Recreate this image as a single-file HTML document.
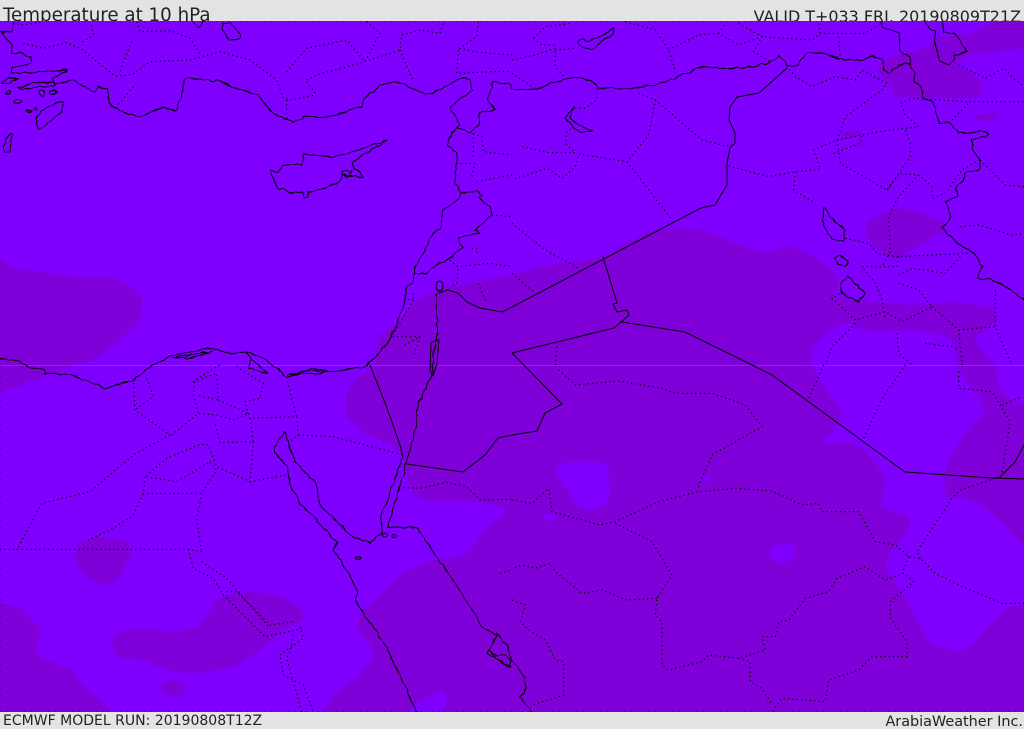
<!DOCTYPE html>
<html><head><meta charset="utf-8"><title>Temperature at 10 hPa</title>
<style>
html,body{margin:0;padding:0;background:#e3e3e3;}
#p{position:relative;width:1024px;height:729px;overflow:hidden;background:#e3e3e3;font-family:"DejaVu Sans",sans-serif;color:#222;}
.t{position:absolute;white-space:nowrap;}
#m{position:absolute;left:0;top:21px;width:1024px;height:691px;display:block;}
.c{fill:none;stroke:#000;stroke-width:1;stroke-linejoin:round;stroke-linecap:round;}
.d{fill:none;stroke:#000;stroke-width:3.6;stroke-dasharray:3.6 9.5;stroke-linecap:butt;opacity:1;}
</style></head><body><div id="p">
<div class="t" style="left:3px;top:5px;font-size:18.25px;line-height:21px;">Temperature at 10 hPa</div>
<div class="t" style="right:3px;top:6px;font-size:15.95px;line-height:21px;">VALID T+033 FRI. 20190809T21Z</div>
<div class="t" style="left:3px;top:712.500px;font-size:14.02px;line-height:17px;">ECMWF MODEL RUN: 20190808T12Z</div>
<div class="t" style="right:1px;top:713px;font-size:14.4px;line-height:18px;">ArabiaWeather Inc.</div>
<svg id="m" viewBox="0 21 1024 691" xmlns="http://www.w3.org/2000/svg">
<defs><filter id="s" filterUnits="userSpaceOnUse" x="-60" y="-60" width="1144" height="850" color-interpolation-filters="sRGB"><feGaussianBlur stdDeviation="2.2"/><feComponentTransfer><feFuncA type="linear" slope="3" intercept="-1"/></feComponentTransfer></filter>
<filter id="w" filterUnits="userSpaceOnUse" x="-20" y="-20" width="1064" height="770" color-interpolation-filters="sRGB"><feTurbulence type="fractalNoise" baseFrequency=".14" numOctaves="2" seed="4" result="n"/><feDisplacementMap in="SourceGraphic" in2="n" scale="4" xChannelSelector="R" yChannelSelector="G"/></filter></defs>
<rect x="0" y="21" width="1024" height="691" fill="#7f00ff"/>
<g filter="url(#s)" fill="#7f00d8" fill-rule="evenodd">
<path d="M-30,240 0,258 12,268 40,272 75,277 110,277 130,285 143,300 140,320 120,340 95,360 75,365 45,376 0,393 -30,410Z"/>
<path d="M512,275 537,267 602,257 645,233 682,227 712,233 745,247 765,253 789,246 812,255 832,270 840,283 832,297 879,302 912,305 955,302 992,307 999,320 988,328 974,338 978,347 995,365 999,388 1009,398 1050,420 1050,560 1024,545 1015,538 1005,525 979,503 962,498 945,497 945,468 955,448 972,425 985,412 979,398 962,375 957,365 955,343 942,335 912,330 869,332 849,323 832,328 812,347 812,365 825,388 840,408 840,422 819,445 850,442 865,450 882,472 885,480 880,507 910,517 910,527 889,555 885,568 902,592 917,622 932,645 959,652 974,643 989,625 1009,607 1024,605 1050,600 1050,750 300,750 322,712 333,695 357,678 372,658 373,648 357,628 358,615 383,592 403,572 433,560 467,555 480,535 505,513 505,507 480,502 430,502 413,495 408,478 403,455 390,443 367,435 347,418 345,395 353,382 375,365 377,347 377,337 397,322 417,300 443,288Z
M400,740 408,712 417,702 443,690 447,698 443,712 440,740Z
M555,472 562,463 582,461 605,463 609,472 609,488 611,493 605,505 592,510 579,507 572,497 562,483Z
M766,553 779,544 794,544 795,553 789,562 775,562Z"/>
<path d="M875,67 885,60 905,52 922,50 939,37 972,33 995,21 1000,0 1050,0 1050,46 1024,48 965,55 955,65 975,75 985,88 979,98 895,97 892,87Z"/>
<path d="M864,230 869,220 895,207 912,210 945,222 942,233 922,243 902,257 889,257 872,245Z"/>
<path d="M75,555 80,542 103,537 127,540 132,552 125,568 115,582 103,585 90,580 78,568Z"/>
<path d="M111,645 117,633 137,629 177,632 197,627 207,615 217,598 250,591 283,597 303,610 303,620 280,632 257,652 233,667 200,673 173,672 143,660 117,657Z"/>
<path d="M-30,600 0,603 20,608 40,628 37,652 47,660 72,670 80,683 113,712 140,740 -30,740Z"/>
</g>
<g fill="#7f00d8"><ellipse cx="174" cy="688" rx="12" ry="8"/><ellipse cx="987" cy="117" rx="11" ry="4"/><ellipse cx="852" cy="134" rx="10" ry="3.5"/></g>
<g fill="#7f00ff"><ellipse cx="550" cy="517" rx="6" ry="4"/><ellipse cx="705" cy="479" rx="5" ry="3"/></g>
<rect x="0" y="365" width="1024" height="1" fill="#fff" opacity=".14"/>

<!-- wobbly natural boundaries -->
<g filter="url(#w)">
<path class="c" d="M13,22 12,31 3,33 0,32M0,32 7,38 11,44 12,53 20,52 25,56 32,58 31,62 27,65 13,67 12,73 23,73 68,70 53,78 54,84 61,84 63,82 73,80 83,86 90,90 95,92 98,86 108,90 108,103 118,110 130,115 140,117 163,107 175,112 178,106 183,93 183,80 188,78 217,81 233,87 257,95 265,104 273,113 285,119 295,122 303,117 333,116 345,112 353,108 362,107 363,100 380,85 397,81 410,87 427,95 440,90 450,84 462,77 470,80 472,90 450,107 460,125 452,132 447,145 457,153 455,180 460,193 460,198 443,210 440,228 433,233 425,250 415,267 413,283 407,287 404,304 397,323 388,342 380,353 367,365 363,367 333,372 313,368 287,377 272,365 263,358 250,352 230,353 210,348 190,352 172,355 153,365 133,380 107,388 70,375 45,374 45,369 30,368 20,362 0,358"/>
<path class="c" d="M172,357 190,355 205,352 212,351 195,357 182,358ZM246,353 252,358 248,368 268,374 258,365ZM288,374 300,372 315,370 328,372 310,374Z"/>
<path class="c" d="M457,128 470,132 480,125 479,113 495,110 488,100 493,81 512,85 512,89 535,90 549,84 574,77 590,80 599,88 625,89 655,85 675,78 704,66 725,68 742,68 769,63 779,56 785,60 787,67 797,65 807,53 822,53 845,60 862,61 872,56 882,60 884,70 889,73 899,65 909,63"/>
<path class="c" d="M880,22 884,28 899,33 900,50 910,57 910,68 915,72 914,82 922,87 924,98 934,103 939,123 949,123 959,133 979,131 989,133 985,137 972,140 972,148 980,160 980,170 967,172 962,182 957,187 957,197 945,202 950,212 949,220 942,228 959,245 974,253 982,267 977,278 992,280 1009,288 1024,300"/>
<path class="c" d="M415,273 427,273 437,265 450,258 462,248 458,238 480,233 475,230 492,215 490,207 478,197 483,195 477,191 460,193"/>
<path class="c" d="M270,170 278,172 283,165 302,165 304,154 333,157 353,152 388,140 362,155 353,163 355,168 363,177 343,175 338,183 320,190 308,192 308,197 304,197 302,192 293,193 278,188 273,178Z"/>
<path class="c" d="M342,171 352,172 353,169 349,174 354,177 345,176 342,175Z"/>
<path class="c" d="M37,117 45,108 63,101 62,112 52,120 40,129 36,125Z"/>
<path class="c" d="M18,88 33,83 53,82 55,86 33,87 20,89Z"/>
<path class="c" d="M1,83 8,78 18,78 10,82 2,84Z"/>
<path class="c" d="M5,143 10,133 12,133 11,140 10,152 5,152 3,146Z"/>
<path class="c" d="M222,23 230,23 240,33 241,38 230,41 223,30Z"/>
<path class="c" d="M193,22 198,28 203,22"/>
<path class="c" d="M49,91 54,90 57,92 54,94 50,94Z"/>
<ellipse class="c" cx="42" cy="93" rx="2.500" ry="3"/><ellipse class="c" cx="8" cy="93" rx="2" ry="1.200"/><ellipse class="c" cx="18" cy="102" rx="4" ry="1.800"/><ellipse class="c" cx="29" cy="111" rx="3" ry="1"/><ellipse class="c" cx="36" cy="109" rx="1.200" ry="1.200"/>
<path class="c" d="M577,42 584,38 587,42 600,37 609,32 614,27 612,35 600,43 592,50 582,47Z"/>
<path class="c" d="M574,107 565,118 574,128 580,133 592,130 582,127 570,118Z"/>
<path class="c" d="M925,22 929,28 935,32 935,43 939,60 949,65 954,60 955,55 967,52 960,42 955,33 944,32 942,22"/>
<path class="c" d="M824,208 827,210 830,217 845,230 844,241 832,239 822,223Z"/>
<path class="c" d="M835,258 840,255 849,262 845,267 837,263Z"/>
<path class="c" d="M847,275 855,283 865,293 859,302 842,293 840,285Z"/>
<path class="c" d="M403,457 393,485 380,518 382,532 370,543 350,535 320,505 315,482 295,462 285,432 275,445 275,453 288,468 290,485 300,503 337,542 333,550 350,575 358,592 355,600 387,648 417,712"/>
<path class="c" d="M408,455 403,475 388,528 393,527 418,528 433,552 450,575 483,628 497,635 493,643 487,653 510,667M496,632 507,645 510,655 512,660 525,678 525,693 520,697 532,712"/>
<path class="c" d="M490,650 497,656 505,654 511,661 509,667 497,660Z"/>
<path class="c" d="M437,293 437,333 436,342 432,365 433,372 427,385 417,408 417,423 408,455"/>
</g>
<!-- straight borders -->
<g>
<path class="c" d="M787,68 759,93 737,97 730,107 729,120 735,133 735,143 730,148 727,163 727,185 715,205 701,208 512,307 502,312 480,308 467,302 458,293 448,290 439,293"/>
<path class="c" d="M603,257 617,303 613,304 617,312 627,310 629,315 614,328 512,353 562,404 545,413 537,431 512,435 498,438 485,455 463,472 407,464"/>
<path class="c" d="M622,322 685,332 752,365 772,375 905,472 992,478 1024,479M1000,477 1015,462 1024,445"/>
<path class="c" d="M370,365 387,408 400,445 403,457"/>
<path class="c" d="M431,343 436,340 439,340 437,363 433,376 430,370Z"/>
<ellipse class="c" cx="439.500" cy="286" rx="3.500" ry="5"/>
<ellipse class="c" cx="385" cy="535" rx="2.500" ry="2"/><ellipse class="c" cx="394" cy="536" rx="2" ry="1.500"/><ellipse class="c" cx="358" cy="558" rx="3" ry="1.200"/>
</g>

<g transform="scale(.33333)">
<path class="d" d="M40,70 70,75 130,65M70,130 130,145 200,128 250,150 290,185 345,228 395,225 450,185 570,180 660,155 750,180 830,240 850,295 870,300 945,285M275,75 280,105 240,130M410,65 420,95 510,92 570,115 600,160M395,125 365,200 360,220M400,260 350,320M860,215 920,145 1040,120 1095,185 1140,100 1100,65M920,240 950,225 1095,185 1200,150 1205,105 1260,90 1320,100 1330,65M1200,150 1240,245M860,300 860,360M920,245 950,285M1435,65 1430,110 1380,145 1420,155 1536,165M1375,150 1370,220 1480,215 1536,215M1420,400 1445,410 1450,455 1536,465M1420,400 1420,470M1370,490 1425,490 1415,530M1430,545 1536,525M1475,645 1536,650M1415,745 1432,745 1430,760M1350,780 1375,800 1370,850 1350,860M1370,800 1470,790 1536,800M1435,850 1460,910M1240,880 1240,895 1220,900M1240,900 1200,970 1175,1010 1260,1010 1205,1040M1260,1010 1240,1070"/>
</g>
<g transform="translate(512,0) scale(.33333)">
<path class="d" d="M0,180 70,165 130,145 130,200 160,235M130,150 190,145M65,115 100,80 180,70M65,115 90,135 130,135M340,65 430,90 470,150 490,215M470,150 560,105 620,100 680,135 750,110 900,120 925,100 1060,100 1100,75M620,100 640,70M680,70 750,110 725,155 775,185M925,100 920,65M980,110 985,170M0,220 75,270M255,265 255,300 220,325 180,325M380,280 430,300 410,405 345,485 200,462 190,500 150,535 105,505 0,540M430,300 570,420 640,438 665,435M30,440 110,458 190,458 160,430 165,395 180,385M345,485 480,660M0,670 100,750 200,805M0,820 70,880M650,498 770,530 850,515 925,508 905,450 975,420 1100,395 1220,380 1180,345 1165,310 1200,295 1370,305 1536,305M850,515 845,570 910,610M975,420 1000,350 1110,270 1125,250 1050,210 1030,240 970,230 900,260 850,230 825,200M965,460 1045,430 1050,405M975,420 985,490 1125,570 1195,470 1195,430 1180,390M1125,570 1165,520 1220,525 1260,560 1260,595 1300,580 1350,510 1400,480M1220,525 1160,590 1130,650 1135,755 1110,800M1320,360 1370,310M1340,195 1420,235 1475,205 1510,240 1536,260M1405,480 1480,555 1536,560M1345,680 1400,675 1500,705 1536,700M1000,715 1070,730 1095,760 1150,770 1375,760M1160,770 1155,800 1050,800 1090,850 1110,900 1120,960M1160,825 1200,805 1300,820 1345,770M1160,850 1220,870 1260,920 1170,965 1120,935 1030,960 960,895 1000,870M1260,920 1340,990 1350,1095M1340,990 1450,980 1500,1095M1450,870 1450,980M1155,1000 1160,1060 1200,1095M1240,1030 1320,1040 1340,1050M1030,970 960,1040 940,1095M135,1040 130,1095"/>
</g>
<g transform="translate(0,365) scale(.33333)">
<path class="d" d="M400,40 405,135 510,210M440,40 460,95 405,135M515,210 595,145 580,90 585,45 660,0M580,50 650,25 655,105 590,90M510,210 400,270 270,380 125,415 50,555M655,105 745,145 700,165 650,150 590,145M710,5 790,55 780,100 735,110 745,145 750,160 890,155 860,40M750,160 760,230 660,233 645,175M890,155 895,210 870,230M895,210 1000,215 1210,270M760,230 750,350 650,305 625,240 600,238 500,280 435,335 530,350 630,290M750,350 860,330M630,290 650,315 605,385 430,385M435,335 430,385 400,450 340,490 265,525M605,385 590,465 605,560M0,553 565,553 605,560M565,553 580,610 640,640 670,690 795,815 910,790M605,590 680,640 810,790M680,680 710,680 810,780 880,770M900,785 910,820 840,870 850,930 910,960 940,1040M880,810 870,860 860,880 905,1040M1210,368 1260,370 1340,352 1400,365 1440,405 1536,403M1500,625 1536,615"/>
</g>
<g transform="translate(512,365) scale(.33333)">
<path class="d" d="M0,405 60,415 110,370 120,440 210,465 265,480 310,470 440,410 560,380 670,370 780,378 870,420 920,415 930,440 1040,440 1090,530 1150,540 1190,575 1225,580 1270,625 1350,665 1470,715 1536,715M140,15 190,60 320,48 450,70 490,85 600,85 700,120 750,185 600,270 570,340 555,375M310,475 420,530 480,630 435,700 430,750 450,770 450,900 470,915 570,890 590,870 680,880 760,855 750,815 790,815 800,770 830,765 880,700 950,680 975,640 1060,605 1120,645 1175,625 1205,650 1135,710 1135,760 1185,830 1185,875 1080,875 1040,915 950,945 940,1010 810,1000 780,1040M680,880 715,890 715,950 750,970 780,1020M435,700 340,705 270,675 210,685 130,620 115,595 70,610 30,600 0,610M0,705 40,720 25,770 50,795 100,825 130,885 155,890 155,990 60,1020M935,0 890,100M1180,0 1110,100 1055,220M1225,580 1215,560 1320,400 1345,375 1465,335M1190,575 1170,625M1340,20 1340,70 1440,80 1495,170 1470,325M1470,120 1530,95"/>
</g>
<path d="M0,21.500H1024M0,711.500H1024M0.500,365V712" fill="none" stroke="#000" stroke-width=".8" stroke-dasharray="1 5" opacity=".5"/>
</svg>
</div></body></html>
